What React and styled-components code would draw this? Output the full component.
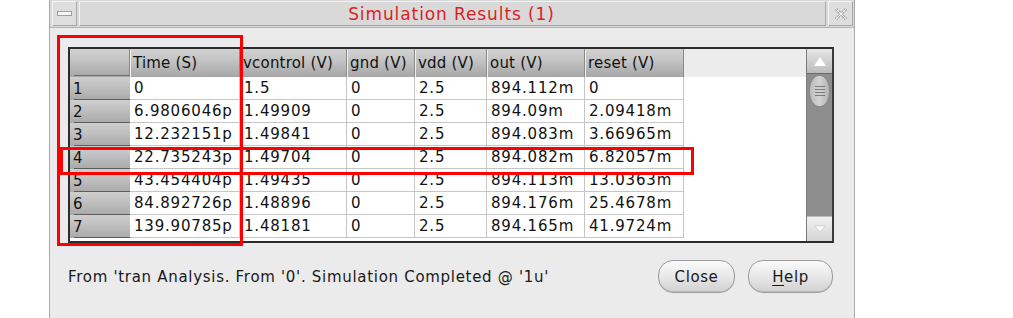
import React from 'react';
import styled, { createGlobalStyle } from 'styled-components';

const GlobalStyle = createGlobalStyle`
  html, body {
    margin: 0;
    padding: 0;
    background: #ffffff;
    overflow: hidden;
  }
  body {
    font-family: "DejaVu Sans", "Liberation Sans", sans-serif;
    color: #111;
  }
`;

const columns = [
  { label: 'Time (S)', width: 110 },
  { label: 'vcontrol (V)', width: 107 },
  { label: 'gnd (V)', width: 68 },
  { label: 'vdd (V)', width: 72 },
  { label: 'out (V)', width: 98 },
  { label: 'reset (V)', width: 99 },
];

const rows = [
  ['0', '1.5', '0', '2.5', '894.112m', '0'],
  ['6.9806046p', '1.49909', '0', '2.5', '894.09m', '2.09418m'],
  ['12.232151p', '1.49841', '0', '2.5', '894.083m', '3.66965m'],
  ['22.735243p', '1.49704', '0', '2.5', '894.082m', '6.82057m'],
  ['43.454404p', '1.49435', '0', '2.5', '894.113m', '13.0363m'],
  ['84.892726p', '1.48896', '0', '2.5', '894.176m', '25.4678m'],
  ['139.90785p', '1.48181', '0', '2.5', '894.165m', '41.9724m'],
];

const gridTemplate = `60px ${columns.map(c => `${c.width}px`).join(' ')} 1fr`;

//====== Page ======//
const Page = styled.div`
  position: relative;
  display: flex;
  height: 318px;
  padding-left: 49px;
`;

const Window = styled.div`
  width: 804px;
  height: 318px;
  display: flex;
  flex-direction: column;
  border-left: 1px solid #a9a9a9;
  border-right: 1px solid #a9a9a9;
  background: #ebebeb;
`;

//====== Title bar ======//
const TitleBar = styled.div`
  display: flex;
  align-items: center;
  height: 27px;
  padding: 0 1px 0 2px;
  background: #dadada;
  border-bottom: 1px solid #b4b4b4;
  gap: 2px;
`;

const TitleButton = styled.div`
  width: 23px;
  height: 23px;
  display: flex;
  align-items: center;
  justify-content: center;
  background: #dedede;
  border: 1px solid #f4f4f4;
  border-right-color: #a8a8a8;
  border-bottom-color: #a8a8a8;
`;

const MinimizeBar = styled.div`
  width: 13px;
  height: 3px;
  background: #f6f6f6;
  border: 1px solid #a0a0a0;
`;

const TitleArea = styled.div`
  flex: 1;
  height: 23px;
  display: flex;
  align-items: center;
  justify-content: center;
  border: 1px solid #f2f2f2;
  border-right-color: #a8a8a8;
  border-bottom-color: #a8a8a8;
  background: #d9d9d9;
`;

const Title = styled.span`
  color: #dc1f1f;
  font-size: 17px;
  letter-spacing: 0.9px;
  padding-right: 2px;
`;

//====== Body ======//
const Body = styled.div`
  display: flex;
  flex-direction: column;
  padding: 19px 20px 0 18px;
`;

const TableFrame = styled.div`
  display: flex;
  height: 192px;
  border: 2px solid #2c2c2c;
  border-right-color: #3a3a3a;
  background: #ffffff;
  overflow: hidden;
`;

const Grid = styled.div`
  flex: 1;
  display: grid;
  grid-template-columns: ${gridTemplate};
  grid-auto-rows: 23px;
  grid-template-rows: 28px;
  align-content: start;
  font-size: 15px;
  letter-spacing: 0.8px;
`;

const HeaderCell = styled.div`
  display: flex;
  align-items: center;
  padding-left: ${props => (props.corner ? 0 : 2)}px;
  background: linear-gradient(#d2d2d2, #c4c4c4 40%, #a6a6a6);
  border-left: ${props => (props.corner ? 'none' : '1px solid #f0f0f0')};
  border-right: 1px solid #8a8a8a;
  white-space: nowrap;
  overflow: hidden;
  letter-spacing: 0.2px;
  position: relative;

  ${props => (props.corner ? `
    &::after {
      content: '';
      position: absolute;
      left: 4px;
      right: 0;
      bottom: 1px;
      height: 1px;
      background: #6e6e6e;
    }
  ` : null)}
`;

const HeaderFill = styled.div`
  background: #ececec;
`;

const RowHead = styled.div`
  display: flex;
  align-items: center;
  padding-left: 3px;
  background: linear-gradient(#cfcfcf, #bdbdbd 50%, #a9a9a9);
  position: relative;

  &::after {
    content: '';
    position: absolute;
    left: 4px;
    right: 0;
    bottom: 0;
    height: 1px;
    background: #5c5c5c;
  }
`;

const Cell = styled.div`
  display: flex;
  align-items: center;
  padding-left: 4px;
  border-right: 1px solid #c6c6c6;
  border-bottom: 1px solid #c6c6c6;
  white-space: nowrap;
  overflow: hidden;
`;

const EmptyCell = styled.div`
  background: #ffffff;
`;

//====== Scrollbar ======//
const Scrollbar = styled.div`
  width: 25px;
  display: flex;
  flex-direction: column;
  background: #8e8e8e;
  border-left: 1px solid #7a7a7a;
`;

const ArrowButton = styled.div`
  height: 24px;
  display: flex;
  align-items: center;
  justify-content: center;
  background: ${props => (props.down
    ? 'linear-gradient(#f0f0f0, #d4d4d4)'
    : 'linear-gradient(#e6e6e6, #bcbcbc)')};
  border-bottom: 1px solid #6a6a6a;
  ${props => (props.down ? 'margin-top: auto; border-top: 1px solid #bbb; border-bottom: none;' : null)}
`;

const Thumb = styled.div`
  margin: 1px 2px 0 2px;
  height: 30px;
  border-radius: 10px / 15px;
  background: linear-gradient(90deg, #bdbdbd, #d2d2d2 50%, #b4b4b4);
  border: 1px solid #8a8a8a;
  display: flex;
  flex-direction: column;
  align-items: center;
  justify-content: center;
  gap: 2px;
`;

const Grip = styled.div`
  width: 10px;
  height: 1px;
  background: #7c7c7c;
`;

//====== Footer ======//
const Footer = styled.div`
  display: flex;
  align-items: center;
  justify-content: space-between;
  margin-top: 17px;
  padding-right: 1px;
`;

const Status = styled.span`
  font-size: 15px;
  letter-spacing: 0.7px;
  color: #1a1a1a;
`;

const ButtonRow = styled.div`
  display: flex;
  gap: 13px;
`;

const DialogButton = styled.button`
  height: 33px;
  width: ${props => props.width}px;
  border-radius: 15px;
  border: 1px solid #9c9c9c;
  background: linear-gradient(#fafafa, #e6e6e6 55%, #d0d0d0);
  box-shadow: inset 0 -1px 0 #bdbdbd;
  font-family: "DejaVu Sans", sans-serif;
  font-size: 15px;
  letter-spacing: 0.6px;
  color: #1a1a1a;
  padding: 0;
`;

//====== Annotation ======//
const Mark = styled.div`
  position: absolute;
  border: 3px solid #ff0000;
  pointer-events: none;
`;

const Underline = styled.span`
  text-decoration: underline;
  text-underline-offset: 3px;
`;

export default function App() {
  return (
    <>
      <GlobalStyle />
      <Page>
        <Window>
          <TitleBar>
            <TitleButton>
              <MinimizeBar />
            </TitleButton>
            <TitleArea>
              <Title>Simulation Results (1)</Title>
            </TitleArea>
            <TitleButton>
              <svg width="16" height="16" viewBox="0 0 16 16">
                <path d="M3 3 L13 13 M13 3 L3 13" stroke="#a4a4a4" strokeWidth="3" strokeDasharray="2 1.2" fill="none" />
                <path d="M3 3 L13 13 M13 3 L3 13" stroke="#f2f2f2" strokeWidth="1" fill="none" />
              </svg>
            </TitleButton>
          </TitleBar>
          <Body>
            <TableFrame>
              <Grid>
                <HeaderCell corner />
                {columns.map(c => (
                  <HeaderCell key={c.label}>{c.label}</HeaderCell>
                ))}
                <HeaderFill />
                {rows.map((r, i) => (
                  <React.Fragment key={i}>
                    <RowHead>{i + 1}</RowHead>
                    {r.map((v, j) => (
                      <Cell key={j}>{v}</Cell>
                    ))}
                    <EmptyCell />
                  </React.Fragment>
                ))}
              </Grid>
              <Scrollbar>
                <ArrowButton>
                  <svg width="14" height="11" viewBox="0 0 14 11">
                    <path d="M7 1 L13 10 L1 10 Z" fill="#ffffff" />
                  </svg>
                </ArrowButton>
                <Thumb>
                  <Grip />
                  <Grip />
                  <Grip />
                  <Grip />
                </Thumb>
                <ArrowButton down>
                  <svg width="12" height="8" viewBox="0 0 12 8">
                    <path d="M1 1 L11 1 L6 7 Z" fill="#ffffff" stroke="#c4c4c4" strokeWidth="0.6" />
                  </svg>
                </ArrowButton>
              </Scrollbar>
            </TableFrame>
            <Footer>
              <Status>From 'tran Analysis. From '0'. Simulation Completed @ '1u'</Status>
              <ButtonRow>
                <DialogButton width={77}>Close</DialogButton>
                <DialogButton width={85}><Underline>H</Underline>elp</DialogButton>
              </ButtonRow>
            </Footer>
          </Body>
        </Window>
        <Mark style={{ left: 57, top: 35, width: 180, height: 205 }} />
        <Mark style={{ left: 60, top: 147, width: 628, height: 22 }} />
      </Page>
    </>
  );
}
